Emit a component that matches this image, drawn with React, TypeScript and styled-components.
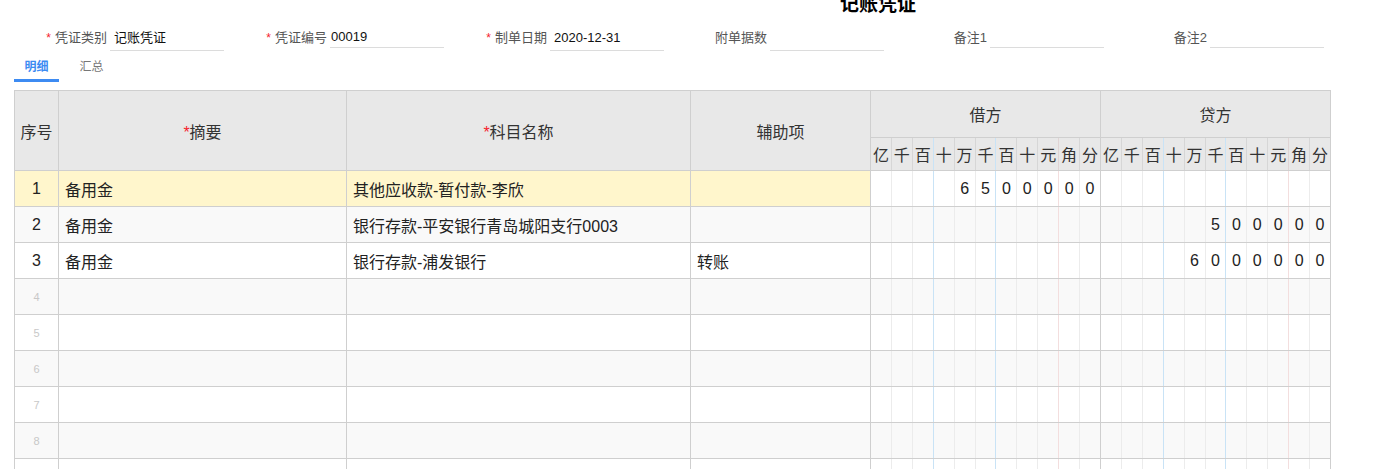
import React from "react";
import styled, { createGlobalStyle, css } from "styled-components";

const Global = createGlobalStyle`
  html, body { margin: 0; padding: 0; background: #fff; overflow: hidden; }
  body { font-family: "Liberation Sans", "Noto Sans CJK SC", sans-serif; color: #333; }
`;

const Page = styled.div`
  width: 1375px;
  display: flex;
  flex-direction: column;
`;

const Title = styled.h1`
  margin: -5px 0 0 840px;
  font-size: 19px;
  line-height: 20px;
  font-weight: 700;
  color: #000;
`;

const FormRow = styled.div`
  display: flex;
  margin: 12px 0 0 4px;
  align-items: flex-start;
`;

const Field = styled.div`
  width: 220px;
  display: flex;
  align-items: flex-start;
  gap: 3px;
  font-size: 13px;
`;

const Label = styled.label`
  width: 103px;
  text-align: right;
  line-height: 22px;
  color: #555;
  white-space: nowrap;
`;

const Star = styled.span`
  color: #f5222d;
  margin-right: 4px;
  font-size: 12px;
`;

const Value = styled.div<{ $select?: boolean }>`
  width: 114px;
  box-sizing: border-box;
  border-bottom: 1px solid #dcdcdc;
  color: #111;
  white-space: nowrap;
  ${(p) =>
    p.$select
      ? css`
          height: 24px;
          line-height: 22px;
          padding-left: 4px;
        `
      : css`
          height: 21px;
          line-height: 20px;
          padding-left: 1px;
        `}
`;

const Tabs = styled.div`
  display: flex;
  margin: 6px 0 0 14px;
`;

const Tab = styled.div<{ $active?: boolean }>`
  width: 45px;
  text-align: center;
  font-size: 12px;
  line-height: 20px;
  padding-bottom: 2px;
  margin-right: 10px;
  border-bottom: 3px solid ${(p) => (p.$active ? "#3d8bf2" : "transparent")};
  color: ${(p) => (p.$active ? "#3d8bf2" : "#777")};
  font-weight: ${(p) => (p.$active ? 700 : 400)};
`;

const Table = styled.table`
  margin: 8px 0 0 14px;
  width: 1317px;
  border-collapse: collapse;
  table-layout: fixed;
  font-size: 16px;
`;

const Head = styled.th<{ $h?: number }>`
  background: #e8e8e8;
  border: 1px solid #cfcfcf;
  font-weight: 400;
  color: #333;
  text-align: center;
  padding: 0;
  height: ${(p) => p.$h ?? 46}px;
`;

const ReqStar = styled.span`
  color: #f5222d;
`;

const sepColor = (i: number, head: boolean) => {
  if (i === 0) return "#cfcfcf";
  if (i === 3 || i === 6) return "#c9e3f6";
  if (i === 9) return head ? "#e0d4d4" : "#f3dede";
  return head ? "#d6d6d6" : "#ececec";
};

const digitBorders = (i: number, head: boolean) => css`
  border-top: 1px solid #cfcfcf;
  border-bottom: 1px solid #cfcfcf;
  border-left: 1px solid ${sepColor(i, head)};
  border-right: ${i === 10 ? "1px solid #cfcfcf" : "none"};
`;

const DigitHead = styled.th<{ $i: number }>`
  background: #e8e8e8;
  ${(p) => digitBorders(p.$i, true)}
  font-weight: 400;
  color: #333;
  padding: 0;
  height: 32px;
  text-align: center;
  font-family: "Noto Sans CJK SC", sans-serif;
  font-size: 16px;
  overflow: hidden;
`;

const Row = styled.tr<{ $bg: string }>`
  background: ${(p) => p.$bg};
`;

const Cell = styled.td<{ $bg?: string; $center?: boolean; $faint?: boolean }>`
  height: 35px;
  border: 1px solid #cfcfcf;
  padding: 0 6px;
  white-space: nowrap;
  overflow: hidden;
  background: ${(p) => p.$bg ?? "inherit"};
  text-align: ${(p) => (p.$center ? "center" : "left")};
  color: ${(p) => (p.$faint ? "#c8c8c8" : "#222")};
  font-size: ${(p) => (p.$faint ? "11px" : "16px")};
`;

const DigitCell = styled.td<{ $i: number }>`
  height: 35px;
  padding: 0;
  text-align: center;
  color: #222;
  ${(p) => digitBorders(p.$i, false)}
`;

const units = ["亿", "千", "百", "十", "万", "千", "百", "十", "元", "角", "分"];

type Line = {
  summary: string;
  subject: string;
  aux: string;
  debit: string;
  credit: string;
};

const lines: Line[] = [
  { summary: "备用金", subject: "其他应收款-暂付款-李欣", aux: "", debit: "6500000", credit: "" },
  { summary: "备用金", subject: "银行存款-平安银行青岛城阳支行0003", aux: "", debit: "", credit: "500000" },
  { summary: "备用金", subject: "银行存款-浦发银行", aux: "转账", debit: "", credit: "6000000" },
];

const spread = (v: string) => {
  const arr: string[] = Array(11).fill("");
  const chars = v.split("");
  chars.forEach((c, k) => {
    arr[11 - chars.length + k] = c;
  });
  return arr;
};

const Digits: React.FC<{ value: string }> = ({ value }) => (
  <>
    {spread(value).map((d, i) => (
      <DigitCell key={i} $i={i}>
        {d}
      </DigitCell>
    ))}
  </>
);

export default function App() {
  const rows = Array.from({ length: 10 }, (_, i) => lines[i]);
  return (
    <Page>
      <Global />
      <Title>记账凭证</Title>
      <FormRow>
        <Field>
          <Label><Star>*</Star>凭证类别</Label>
          <Value $select>记账凭证</Value>
        </Field>
        <Field>
          <Label><Star>*</Star>凭证编号</Label>
          <Value>00019</Value>
        </Field>
        <Field>
          <Label><Star>*</Star>制单日期</Label>
          <Value $select>2020-12-31</Value>
        </Field>
        <Field>
          <Label>附单据数</Label>
          <Value $select></Value>
        </Field>
        <Field>
          <Label>备注1</Label>
          <Value></Value>
        </Field>
        <Field>
          <Label>备注2</Label>
          <Value></Value>
        </Field>
      </FormRow>
      <Tabs>
        <Tab $active>明细</Tab>
        <Tab>汇总</Tab>
      </Tabs>
      <Table>
        <colgroup>
          <col style={{ width: 44 }} />
          <col style={{ width: 288 }} />
          <col style={{ width: 344 }} />
          <col style={{ width: 180 }} />
          {Array.from({ length: 22 }, (_, i) => (
            <col key={i} />
          ))}
        </colgroup>
        <thead>
          <tr>
            <Head rowSpan={2}>序号</Head>
            <Head rowSpan={2}><ReqStar>*</ReqStar>摘要</Head>
            <Head rowSpan={2}><ReqStar>*</ReqStar>科目名称</Head>
            <Head rowSpan={2}>辅助项</Head>
            <Head colSpan={11}>借方</Head>
            <Head colSpan={11}>贷方</Head>
          </tr>
          <tr>
            {[...units, ...units].map((u, i) => (
              <DigitHead key={i} $i={i % 11}>
                {u}
              </DigitHead>
            ))}
          </tr>
        </thead>
        <tbody>
          {rows.map((r, i) => {
            const selected = i === 0;
            const bg = i % 2 === 1 ? "#f9f9f9" : "#ffffff";
            const hl = selected ? "#fff6cc" : undefined;
            return (
              <Row key={i} $bg={bg}>
                <Cell $center $bg={hl} $faint={!r}>{i + 1}</Cell>
                <Cell $bg={hl}>{r?.summary}</Cell>
                <Cell $bg={hl}>{r?.subject}</Cell>
                <Cell $bg={hl}>{r?.aux}</Cell>
                <Digits value={r?.debit ?? ""} />
                <Digits value={r?.credit ?? ""} />
              </Row>
            );
          })}
        </tbody>
      </Table>
    </Page>
  );
}
